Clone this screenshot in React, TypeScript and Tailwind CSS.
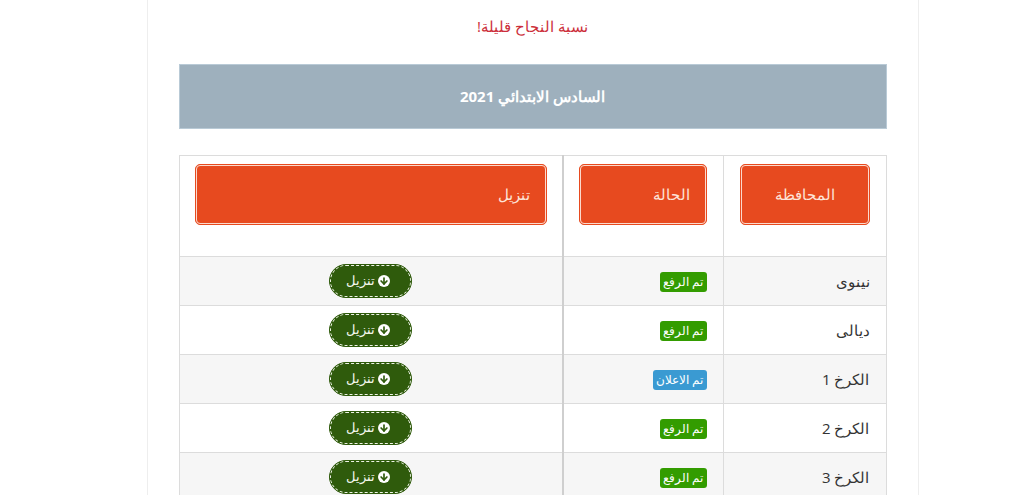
import { ArrowDown } from "lucide-react";

const rows = [
  { name: "نينوى", status: "تم الرفع", kind: "up" },
  { name: "ديالى", status: "تم الرفع", kind: "up" },
  { name: "الكرخ 1", status: "تم الاعلان", kind: "info" },
  { name: "الكرخ 2", status: "تم الرفع", kind: "up" },
  { name: "الكرخ 3", status: "تم الرفع", kind: "up" },
];

function HeadButton({ label, center }: { label: string; center?: boolean }) {
  return (
    <div
      className={`h-[61px] bg-[#e74a1f] rounded-[5px] border border-[#e74a1f] outline outline-1 -outline-offset-2 outline-[#fbd9cc] flex items-center text-[#fde3d8] text-[15px] ${
        center ? "justify-center" : "pr-[16px]"
      }`}
    >
      {label}
    </div>
  );
}

function DownloadButton() {
  return (
    <div className="mx-auto w-[83px] h-[34px] pr-[6px] rounded-full bg-[#2f5b0c] border border-[#2f5b0c] relative flex items-center justify-center gap-[3px] text-[#f4f7ef] text-[13px]">
      <div className="absolute inset-0 rounded-full border border-dashed border-[#eef3e6]" />
      <span className="w-[12px] h-[12px] rounded-full bg-white flex items-center justify-center">
        <ArrowDown size={10} strokeWidth={4} className="text-[#2f5b0c]" />
      </span>
      <span>تنزيل</span>
    </div>
  );
}

export default function App() {
  return (
    <div
      dir="rtl"
      className="h-[495px] overflow-hidden bg-white flex justify-center pl-[41px] font-['Open_Sans','Noto_Sans',sans-serif] text-[#333]"
    >
      <div className="w-[772px] border-x border-[#eeeeee] px-[31px]">
        <p className="h-[64px] pt-[14px] text-center text-[15px] leading-[24px] font-medium text-[#cc2f3a]">
          نسبة النجاح قليلة!
        </p>
        <div className="h-[65px] bg-[#9eb0bd] border border-[#b9cad6] flex items-center justify-center text-white text-[15px] font-bold">
          السادس الابتدائي 2021
        </div>
        <table className="mt-[26px] w-[708px] table-fixed border-collapse border border-[#cfcfcf]">
          <thead>
            <tr className="h-[101px]">
              <th className="w-[163px] border border-[#dcdcdc] px-[16px] pt-[8px] pb-[31px] font-normal align-top">
                <HeadButton label="المحافظة" center />
              </th>
              <th className="w-[160px] border-y border-[#dcdcdc] border-l-2 border-l-[#cfcfcf] pr-[16px] pl-[15px] pt-[8px] pb-[31px] font-normal align-top">
                <HeadButton label="الحالة" />
              </th>
              <th className="border border-[#dcdcdc] px-[15px] pt-[8px] pb-[31px] font-normal align-top">
                <HeadButton label="تنزيل" />
              </th>
            </tr>
          </thead>
          <tbody>
            {rows.map((row, i) => (
              <tr key={row.name} className={`h-[49px] ${i % 2 === 0 ? "bg-[#f6f6f6]" : "bg-white"}`}>
                <td className="border border-[#dcdcdc] pr-[16px] text-[15px]">{row.name}</td>
                <td className="border-y border-[#dcdcdc] border-l-2 border-l-[#cfcfcf] pr-[16px]">
                  <span
                    className={`block w-fit mt-[2px] h-[20px] leading-[20px] px-[3px] rounded-[3px] text-white text-[12px] ${
                      row.kind === "up" ? "bg-[#339c00]" : "bg-[#3a9ad2]"
                    }`}
                  >
                    {row.status}
                  </span>
                </td>
                <td className="border border-[#dcdcdc]">
                  <DownloadButton />
                </td>
              </tr>
            ))}
          </tbody>
        </table>
      </div>
    </div>
  );
}
